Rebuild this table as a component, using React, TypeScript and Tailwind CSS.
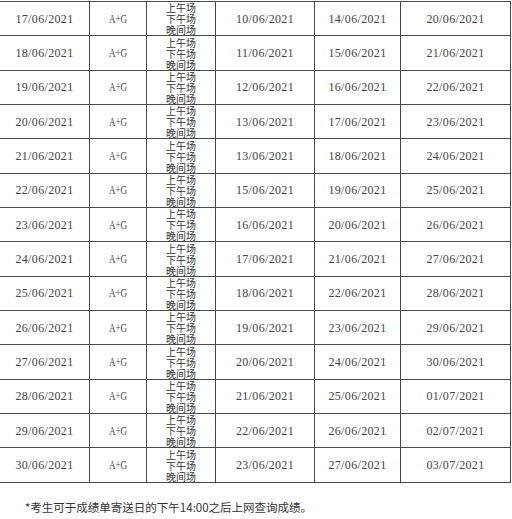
const rows: [string, string, string, string][] = [
  ["17/06/2021", "10/06/2021", "14/06/2021", "20/06/2021"],
  ["18/06/2021", "11/06/2021", "15/06/2021", "21/06/2021"],
  ["19/06/2021", "12/06/2021", "16/06/2021", "22/06/2021"],
  ["20/06/2021", "13/06/2021", "17/06/2021", "23/06/2021"],
  ["21/06/2021", "13/06/2021", "18/06/2021", "24/06/2021"],
  ["22/06/2021", "15/06/2021", "19/06/2021", "25/06/2021"],
  ["23/06/2021", "16/06/2021", "20/06/2021", "26/06/2021"],
  ["24/06/2021", "17/06/2021", "21/06/2021", "27/06/2021"],
  ["25/06/2021", "18/06/2021", "22/06/2021", "28/06/2021"],
  ["26/06/2021", "19/06/2021", "23/06/2021", "29/06/2021"],
  ["27/06/2021", "20/06/2021", "24/06/2021", "30/06/2021"],
  ["28/06/2021", "21/06/2021", "25/06/2021", "01/07/2021"],
  ["29/06/2021", "22/06/2021", "26/06/2021", "02/07/2021"],
  ["30/06/2021", "23/06/2021", "27/06/2021", "03/07/2021"],
];

const date = "flex items-center justify-center border-r border-[#4a4a4a] font-['Liberation_Serif',serif] text-[12px] tracking-[0.35px] text-[#444]";

export default function App() {
  return (
    <div className="w-[512px] h-[519px] bg-white overflow-hidden">
      <div className="mt-px w-[511px] border-t border-[#4a4a4a]">
        {rows.map(([exam, a, b, c]) => (
          <div
            key={exam}
            className="grid h-[34.35px] grid-cols-[90px_57px_69px_99px_86px_110px] border-b border-[#4a4a4a]"
          >
            <div className={date}>{exam}</div>
            <div className="flex items-center justify-center border-r border-[#4a4a4a] font-['Liberation_Serif',serif] text-[12px] text-[#444]">
              <span className="inline-block scale-x-75">A+G</span>
            </div>
            <div className="flex flex-col items-center justify-center border-r border-[#4a4a4a] font-['Noto_Sans_CJK_SC',sans-serif] text-[10px] leading-[11px] text-[#333]">
              <span>上午场</span>
              <span>下午场</span>
              <span>晚间场</span>
            </div>
            <div className={date}>{a}</div>
            <div className={date}>{b}</div>
            <div className={date}>{c}</div>
          </div>
        ))}
      </div>
      <p className="pl-[25px] pt-[16px] font-['Noto_Sans_CJK_SC',sans-serif] text-[11.5px] leading-[16px] text-[#333]">
        *考生可于成绩单寄送日的下午14:00之后上网查询成绩。
      </p>
    </div>
  );
}
